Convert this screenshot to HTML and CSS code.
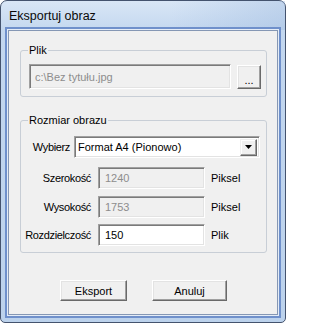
FILE: index.html
```html
<!DOCTYPE html>
<html lang="pl">
<head>
<meta charset="utf-8">
<title>Eksportuj obraz</title>
<link rel="stylesheet" href="styles.css">
</head>
<body>
<div class="window">
  <div class="titlebar"><span class="title">Eksportuj obraz</span></div>
  <div class="client">
    <fieldset class="group group-file">
      <legend>Plik</legend>
      <div class="file-row">
        <div class="field field-disabled field-path">c:\Bez tytułu.jpg</div>
        <button class="btn btn-browse">...</button>
      </div>
    </fieldset>
    <fieldset class="group group-size">
      <legend>Rozmiar obrazu</legend>
      <div class="row row-choose">
        <span class="label label-choose">Wybierz</span>
        <div class="combo">
          <span class="combo-text">Format A4 (Pionowo)</span>
          <span class="combo-btn"><svg width="7" height="4" viewBox="0 0 7 4"><path d="M0 0H7L3.5 4Z" fill="#000"/></svg></span>
        </div>
      </div>
      <div class="row row-width">
        <span class="label">Szerokość</span>
        <div class="field field-disabled field-num">1240</div>
        <span class="unit">Piksel</span>
      </div>
      <div class="row row-height">
        <span class="label">Wysokość</span>
        <div class="field field-disabled field-num">1753</div>
        <span class="unit">Piksel</span>
      </div>
      <div class="row row-res">
        <span class="label">Rozdzielczość</span>
        <div class="field field-num">150</div>
        <span class="unit">Plik</span>
      </div>
    </fieldset>
    <div class="actions">
      <button class="btn btn-action btn-export">Eksport</button>
      <button class="btn btn-action btn-cancel">Anuluj</button>
    </div>
  </div>
</div>
</body>
</html>
```

FILE: styles.css
```css
html, body {
  margin: 0;
  padding: 0;
  background: #ffffff;
  overflow: hidden;
}

.window {
  box-sizing: border-box;
  width: 286px;
  height: 323px;
  border: 1px solid #44536e;
  border-radius: 7px 7px 5px 5px;
  background: linear-gradient(to bottom, #d9e6f6 0px, #c3d7ef 30px, #bcd2ec 100%);
  padding: 0 7px 7px 7px;
  display: flex;
  flex-direction: column;
  font-family: "Liberation Sans", Arial, sans-serif;
  font-size: 11px;
  color: #000;
}

.titlebar {
  height: 29px;
  flex: none;
  display: flex;
  align-items: center;
  background: linear-gradient(to right, rgba(255,255,255,0) 60%, rgba(150,180,220,0.35) 100%);
  margin: 0 -7px;
  padding-left: 8px;
}

.title {
  font-size: 12.5px;
  color: #0a0a0a;
  padding-top: 1px;
}

.client {
  box-sizing: border-box;
  flex: 1;
  background: #f0f0f0;
  border: 1px solid #8597b4;
  box-shadow: 0 0 0 1px #e4ecf7, 0 0 0 3px #6f90cb;
  padding: 13px 10px 0 11px;
  display: flex;
  flex-direction: column;
}

.group {
  margin: 0;
  min-width: 0;
  border: 1px solid #c8ced6;
  border-radius: 3px;
  padding: 7px 5px 7px 8px;
}

.group legend {
  padding: 0 1px;
  margin-left: -1px;
  line-height: 13px;
  font-size: 11px;
}

.group-size {
  margin-top: 17px;
  padding: 9px 5px 6px 8px;
  display: flex;
  flex-direction: column;
}

.file-row {
  display: flex;
  align-items: flex-end;
  gap: 6px;
}

.field {
  box-sizing: border-box;
  height: 22px;
  border: 1px solid;
  border-color: #a0a0a0 #ffffff #ffffff #a0a0a0;
  box-shadow: inset 1px 1px 0 #7a7a7a, inset -1px -1px 0 #e3e3e3;
  background: #ffffff;
  padding-left: 6px;
  display: flex;
  align-items: center;
  white-space: nowrap;
}

.field-disabled {
  background: #f0f0f0;
  color: #8d8d8d;
}

.field-path {
  flex: 1;
  height: 25px;
  padding-left: 5px;
}

.field-num {
  width: 107px;
}

.btn {
  box-sizing: border-box;
  margin: 0;
  padding: 0;
  font-family: "Liberation Sans", Arial, sans-serif;
  font-size: 11px;
  color: #000;
  background: #f0f0f0;
  border: 1px solid;
  border-color: #ffffff #696969 #696969 #ffffff;
  box-shadow: inset -1px -1px 0 #a0a0a0, inset 1px 1px 0 #e3e3e3;
}

.btn-browse {
  width: 24px;
  height: 24px;
  flex: none;
  padding-top: 5px;
}

.row {
  display: flex;
  align-items: center;
}

.row-choose {
  gap: 4px;
  margin-bottom: 9px;
}

.row-width {
  margin-bottom: 7px;
}

.row-height {
  margin-bottom: 6px;
}

.label {
  width: 62px;
  flex: none;
  display: flex;
  justify-content: flex-end;
  margin-right: 7px;
  white-space: nowrap;
  letter-spacing: -0.35px;
}

.label-choose {
  width: 41px;
  margin-right: 0;
}

.unit {
  margin-left: 6px;
}

.combo {
  box-sizing: border-box;
  width: 186px;
  height: 22px;
  border: 1px solid;
  border-color: #a0a0a0 #ffffff #ffffff #a0a0a0;
  box-shadow: inset 1px 1px 0 #7a7a7a, inset -1px -1px 0 #e3e3e3;
  background: #ffffff;
  display: flex;
  align-items: center;
  padding: 2px 2px 2px 3px;
}

.combo-text {
  flex: 1;
  white-space: nowrap;
}

.combo-btn {
  box-sizing: border-box;
  width: 17px;
  height: 17px;
  background: #f0f0f0;
  border: 1px solid;
  border-color: #f0f0f0 #696969 #696969 #f0f0f0;
  box-shadow: inset -1px -1px 0 #a0a0a0, inset 1px 1px 0 #ffffff;
  display: flex;
  align-items: center;
  justify-content: center;
}

.actions {
  margin-top: 27px;
  display: flex;
  justify-content: center;
  gap: 25px;
}

.btn-action {
  height: 21px;
}

.btn-export {
  width: 67px;
}

.btn-cancel {
  width: 75px;
}
```
